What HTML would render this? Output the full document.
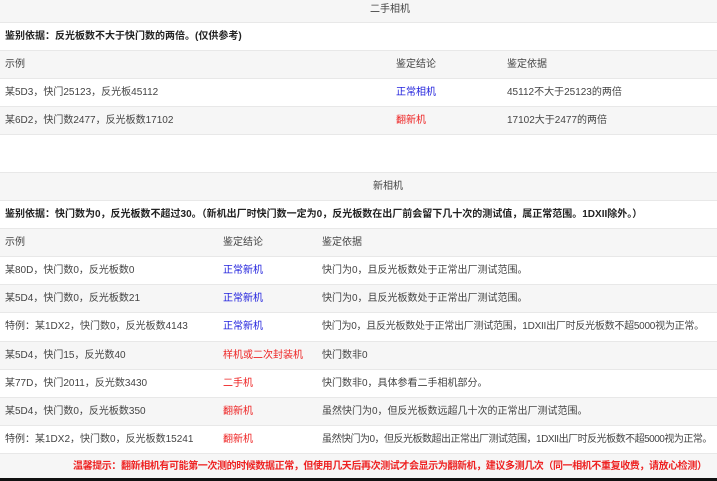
<!DOCTYPE html><html><head><meta charset="utf-8"><style>
body{margin:0;width:717px;height:481px;background:#fff;font-family:"Liberation Sans","Noto Sans CJK SC",sans-serif;font-size:10px;color:#444;position:relative;overflow:hidden}
.r{position:absolute;left:0;width:717px;height:28px;line-height:28px;border-top:1px solid #e8e8e8;box-sizing:border-box}
.g{background:#f6f6f6}
.c{position:absolute;top:0;white-space:nowrap}
.b{font-weight:bold;color:#222}
.bl{color:#2222dd}.rd{color:#ee2222}
.t{letter-spacing:-0.25px}
</style></head><body>
<div class="r g" style="top:0;height:22px;line-height:20px;border:0"><span class="c" style="left:370px">二手相机</span></div>
<div class="r" style="top:22px"><span class="c b" style="left:5px">鉴别依据：反光板数不大于快门数的两倍。(仅供参考)</span></div>
<div class="r g" style="top:50px"><span class="c" style="left:5px">示例</span><span class="c" style="left:396px">鉴定结论</span><span class="c" style="left:507px">鉴定依据</span></div>
<div class="r" style="top:78px"><span class="c" style="left:5px">某5D3，快门25123，反光板45112</span><span class="c bl" style="left:396px">正常相机</span><span class="c" style="left:507px">45112不大于25123的两倍</span></div>
<div class="r g" style="top:106px"><span class="c" style="left:5px">某6D2，快门数2477，反光板数17102</span><span class="c rd" style="left:396px">翻新机</span><span class="c" style="left:507px">17102大于2477的两倍</span></div>
<div class="r" style="top:134px;height:1px"></div>
<div class="r g" style="top:172px"><span class="c" style="left:373px">新相机</span></div>
<div class="r" style="top:200px"><span class="c b" style="left:5px">鉴别依据：快门数为0，反光板数不超过30。（新机出厂时快门数一定为0，反光板数在出厂前会留下几十次的测试值，属正常范围。1DXII除外。）</span></div>
<div class="r g" style="top:228px"><span class="c" style="left:5px">示例</span><span class="c" style="left:223px">鉴定结论</span><span class="c" style="left:322px">鉴定依据</span></div>
<div class="r" style="top:256px"><span class="c" style="left:5px">某80D，快门数0，反光板数0</span><span class="c bl" style="left:223px">正常新机</span><span class="c" style="left:322px">快门为0，且反光板数处于正常出厂测试范围。</span></div>
<div class="r g" style="top:284px"><span class="c" style="left:5px">某5D4，快门数0，反光板数21</span><span class="c bl" style="left:223px">正常新机</span><span class="c" style="left:322px">快门为0，且反光板数处于正常出厂测试范围。</span></div>
<div class="r" style="top:312px"><span class="c" style="left:5px">特例：某1DX2，快门数0，反光板数4143</span><span class="c bl" style="left:223px">正常新机</span><span class="c t" style="left:322px">快门为0，且反光板数处于正常出厂测试范围，1DXII出厂时反光板数不超5000视为正常。</span></div>
<div class="r g" style="top:341px"><span class="c" style="left:5px">某5D4，快门15，反光数40</span><span class="c rd" style="left:223px">样机或二次封装机</span><span class="c" style="left:322px">快门数非0</span></div>
<div class="r" style="top:369px"><span class="c" style="left:5px">某77D，快门2011，反光数3430</span><span class="c rd" style="left:223px">二手机</span><span class="c" style="left:322px">快门数非0，具体参看二手相机部分。</span></div>
<div class="r g" style="top:397px"><span class="c" style="left:5px">某5D4，快门数0，反光板数350</span><span class="c rd" style="left:223px">翻新机</span><span class="c" style="left:322px">虽然快门为0，但反光板数远超几十次的正常出厂测试范围。</span></div>
<div class="r" style="top:425px"><span class="c" style="left:5px">特例：某1DX2，快门数0，反光板数15241</span><span class="c rd" style="left:223px">翻新机</span><span class="c t" style="left:322px;letter-spacing:-0.5px">虽然快门为0，但反光板数超出正常出厂测试范围，1DXII出厂时反光板数不超5000视为正常。</span></div>
<div class="r g" style="top:453px;height:25px;line-height:25px"><span class="c b" style="left:73px;color:#ee2222;letter-spacing:-0.4px">温馨提示：翻新相机有可能第一次测的时候数据正常，但使用几天后再次测试才会显示为翻新机，建议多测几次（同一相机不重复收费，请放心检测）</span></div>
<div style="position:absolute;top:478px;left:0;width:717px;height:3px;background:#111"></div>
</body></html>
